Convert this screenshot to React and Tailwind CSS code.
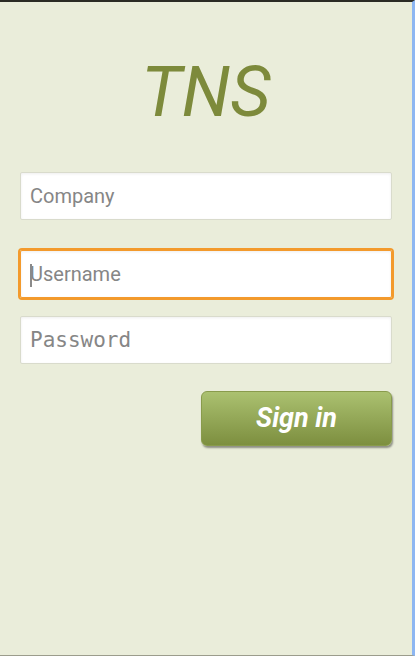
import React from "react";

// Login screen: title, three fields and a sign-in button
const Field = ({ placeholder, mono, focused, type = "text" }) => (
  <div
    className={`relative h-12 w-full bg-white border rounded-[2px] shadow-[inset_0_1px_3px_rgba(0,0,0,0.07)] ${
      focused
        ? "border-[#f39a2c] outline-2 outline-[#f39a2c]"
        : "border-[#d9dbcc]"
    }`}
  >
    <input
      type={type}
      placeholder={placeholder}
      className={`h-full w-full bg-transparent pl-[9px] text-[#555] outline-none placeholder:text-[#868686] ${
        mono
          ? "text-[21px] font-['DejaVu_Sans_Mono',monospace]"
          : "text-[20px] font-['Roboto',sans-serif]"
      }`}
    />
    {focused && (
      <span className="absolute left-[9px] top-[13px] h-[23px] w-[2px] bg-[#8a8a8a]" />
    )}
  </div>
);

const App = () => {
  return (
    <div className="w-[415px] h-[656px] overflow-hidden bg-[#eaedda] border-t-2 border-t-[#2b2b24] border-r-[3px] border-r-[#8db6f2] border-b border-b-[#9b9c8c] font-['Roboto',sans-serif]">
      <div className="flex flex-col px-5 pt-[55px]">
        <h1 className="text-center text-[70px] leading-none italic text-[#7d8a3b]">
          TNS
        </h1>
        <div className="mt-[45px] flex flex-col">
          <Field placeholder="Company" />
          <div className="mt-[30px]">
            <Field placeholder="Username" focused />
          </div>
          <div className="mt-[18px]">
            <Field placeholder="Password" mono type="password" />
          </div>
          <div className="mt-[27px] flex justify-end">
            <button
              type="button"
              className="h-[55px] w-[191px] rounded-[6px] bg-gradient-to-b from-[#abc170] to-[#7d8f3f] text-[27px] font-bold italic text-white shadow-[1px_2px_2px_rgba(0,0,0,0.4)] border border-[#899b4c]"
            >
              Sign in
            </button>
          </div>
        </div>
      </div>
    </div>
  );
};

export default App;
